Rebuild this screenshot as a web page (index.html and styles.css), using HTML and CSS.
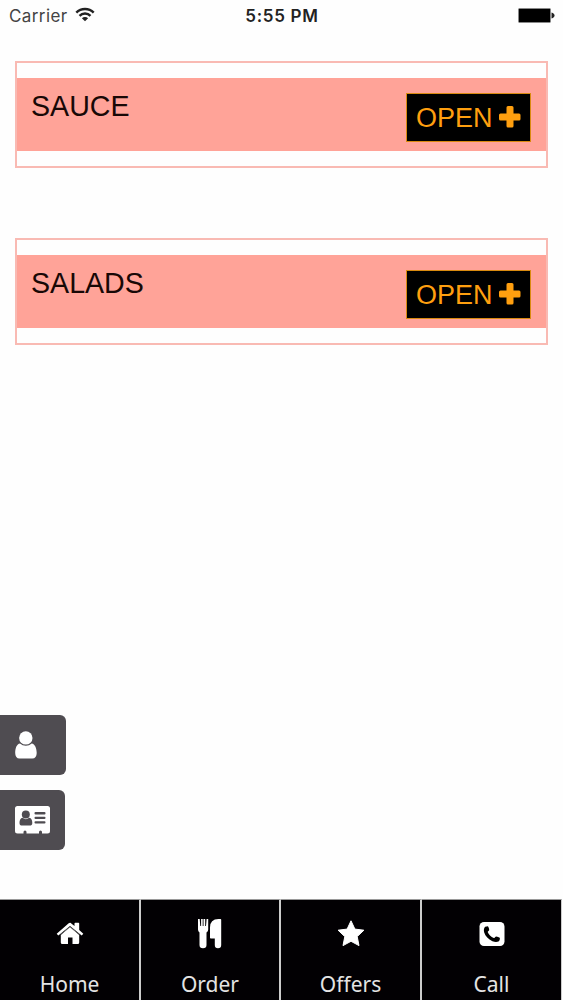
FILE: index.html
```html
<!DOCTYPE html>
<html lang="en">
  <head>
    <meta charset="utf-8" />
    <meta name="viewport" content="width=device-width, initial-scale=1.0" />
    <title>Menu</title>
    <link rel="stylesheet" href="styles.css">
  </head>

  <body>
    <div class="screen">
      <header class="status-bar">
        <div class="carrier">
          <span>Carrier</span>
          <svg class="wifi" width="20" height="15" viewBox="0 0 20 15">
            <path d="M1.300 5.600a12.200 12.200 0 0 1 17.400 0M4.500 8.800a7.800 7.800 0 0 1 11 0" fill="none" stroke="#222" stroke-width="2.400" />
            <path d="M10 14.300L6.900 11.200a4.300 4.300 0 0 1 6.200 0z" fill="#222" />
          </svg>
        </div>
        <div class="time">5:55 PM</div>
        <svg class="battery" width="37" height="15" viewBox="0 0 37 15">
          <rect x=".5" y=".5" width="32" height="14" rx="1" fill="#000" stroke="#888" />
          <path d="M33.500 4.500c4 1 4 5 0 6z" fill="#222" />
        </svg>
      </header>

      <main class="menu">
        <section class="category">
          <div class="category-header">
            <h2>SAUCE</h2>
            <button class="open-btn">
              <span>OPEN</span>
              <svg width="22" height="22" viewBox="0 0 22 22"><path d="M9 0h4q1.500 0 1.500 1.500v6h5.500q1.500 0 1.500 1.500v4q0 1.500-1.500 1.500h-5.500v5.500q0 1.500-1.500 1.500h-4q-1.500 0-1.500-1.500v-5.500h-6q-1.500 0-1.500-1.500v-4q0-1.500 1.500-1.500h6v-6q0-1.500 1.500-1.500z" /></svg>
            </button>
          </div>
        </section>

        <section class="category">
          <div class="category-header">
            <h2>SALADS</h2>
            <button class="open-btn">
              <span>OPEN</span>
              <svg width="22" height="22" viewBox="0 0 22 22"><path d="M9 0h4q1.500 0 1.500 1.500v6h5.500q1.500 0 1.500 1.500v4q0 1.500-1.500 1.500h-5.500v5.500q0 1.500-1.500 1.500h-4q-1.500 0-1.500-1.500v-5.500h-6q-1.500 0-1.500-1.500v-4q0-1.500 1.500-1.500h6v-6q0-1.500 1.500-1.500z" /></svg>
            </button>
          </div>
        </section>
      </main>

      <!--shortcuts on the left edge-->
      <aside class="side-buttons">
        <a class="side-btn side-btn-user">
          <svg width="22" height="28" viewBox="0 0 22 28" fill="#fff">
            <path d="M5 12.500C1.800 13 .200 17 .200 22c0 3.500 1.600 5.500 4.300 5.500h12.800c2.800 0 4.400-2 4.400-5.500-.100-5-1.800-9-5-9.500a8.500 8.500 0 0 1-11.700 0z" />
            <circle cx="10.800" cy="6.900" r="6.700" />
          </svg>
        </a>
        <a class="side-btn side-btn-card">
          <svg width="35" height="28" viewBox="0 0 35 28">
            <path d="M2.500 0h30Q35 0 35 2.500v22.500q0 2.500-2.500 2.500H27v-1.500q0-1.500-1.500-1.500T24 26v1.500H11.500V26q0-1.500-1.500-1.500T8.500 26v1.500h-6Q0 27.500 0 25V2.500Q0 0 2.500 0z" fill="#fff" />
            <g fill="#4f4c51">
              <circle cx="10.800" cy="8.600" r="4" />
              <path d="M7.600 11.800c-2.200.300-3.100 2.500-3.100 5.100 0 1.800 1 2.700 2.600 2.700h7.600c1.600 0 2.600-.9 2.600-2.700 0-2.600-.9-4.800-3.100-5.100a5 5 0 0 1-6.600 0z" />
              <rect x="19.500" y="6" width="11" height="2.600" rx="1" />
              <rect x="19.500" y="10.700" width="11" height="2.400" rx="1" />
              <rect x="19.500" y="15.300" width="11" height="2.300" rx="1" />
            </g>
          </svg>
        </a>
      </aside>

      <nav class="tab-bar">
        <a class="tab">
          <svg width="30" height="30" viewBox="0 0 30 30" fill="#fff">
            <path d="M15 8l9.200 8v7.500q0 1.500-1.500 1.500h-5.200v-6.500h-4.500v6.500H7.300q-1.500 0-1.500-1.500V16z" />
            <path d="M15 3.500l4.500 3.500V4.500q0-.7.700-.7h3.300q.7 0 .7.700v6.500l4.100 3.700-1.600 1.900L15 7 3.300 16.600 1.700 14.700 13.700 4.200q1.300-1.100 2.600 0z" />
            <path d="M5.500 15.700L15 7.800 24.500 15.700" fill="none" stroke="#777" stroke-width=".8" />
          </svg>
          <span>Home</span>
        </a>
        <a class="tab">
          <svg width="30" height="30" viewBox="0 0 30 30" fill="#fff">
            <path d="M3.500 0h1.200l.6 7h.8V0h1.600v7h.8V0h1.700v7h.8l.6-7h1.600v10.500q0 2-1.700 3V26q0 3.200-3.500 3.200T4.500 26V13.500Q3 12.500 3 10.500V0z" />
            <path d="M26.200.700V26q0 3.200-3.200 3.200T19.800 26v-6.500h-4q-.8 0-.8-.8V8.500Q15 0 23.500 0h2q.7 0 .7.700z" />
          </svg>
          <span>Order</span>
        </a>
        <a class="tab">
          <svg width="30" height="30" viewBox="0 0 30 30" fill="#fff">
            <path d="M15 1.800l3.900 8.300 9 1.100-6.700 6.400 1.800 9-8-4.300-8 4.300 1.800-9-6.700-6.400 9-1.100z" stroke="#fff" stroke-linejoin="round" />
          </svg>
          <span>Offers</span>
        </a>
        <a class="tab">
          <svg width="30" height="30" viewBox="0 0 30 30">
            <rect x="2.500" y="3" width="25" height="24" rx="4.500" fill="#fff" />
            <path d="M8.200 7.700l2.700-.4c.7.800 1.300 2.500 1.300 3.600 0 .9-1.500 1.300-1.500 2 .8 2.500 3.300 5 6.100 6.200.8.200 1.500-1.700 2.400-1.700 1 0 3 .8 3.600 1.400.3.900-.2 3-.9 3.500-2 1-4 .9-6.500-.1-4-1.800-7-4.900-8.200-8.700-.7-2.300-.3-4.600 1-5.800z" fill="#000" />
          </svg>
          <span>Call</span>
        </a>
      </nav>
    </div>
  </body>
</html>
```

FILE: styles.css
```css
* {
  box-sizing: border-box;
}

body {
  margin: 0;
  background: #fefefe;
  font-family: "Liberation Sans", Arial, sans-serif;
}

.screen {
  display: flex;
  flex-direction: column;
  width: 563px;
  height: 1000px;
  overflow: hidden;
}

/*status bar: carrier, time, battery*/
.status-bar {
  display: grid;
  grid-template-columns: 1fr auto 1fr;
  align-items: center;
  height: 31px;
  padding: 0 8px 0 9px;
  font-family: Inter, sans-serif;
  color: #222;
}

.carrier {
  display: flex;
  align-items: center;
  gap: 7px;
  font-size: 17px;
  letter-spacing: 0.4px;
  color: #444;
}

.wifi {
  margin-top: -2px;
}

.time {
  font-size: 17px;
  font-weight: 600;
  letter-spacing: 0.7px;
}

.battery {
  justify-self: end;
}

/*menu categories*/
.menu {
  display: flex;
  flex-direction: column;
  gap: 70px;
  padding: 30px 15px 0;
}

.category {
  padding: 15px 0;
  border: 2px solid #f9bab3;
}

.category-header {
  display: flex;
  justify-content: space-between;
  align-items: flex-start;
  height: 73px;
  padding: 15px 15px 0 14px;
  background: #ffa398;
}

.category h2 {
  margin: -3px 0 0;
  font-size: 28.6px;
  font-weight: normal;
  line-height: 32px;
  color: #180806;
}

.open-btn {
  display: flex;
  align-items: center;
  gap: 7px;
  width: 125px;
  height: 49px;
  padding: 0 0 0 9px;
  border: 1.5px solid #d98a10;
  background: #000;
  font-family: inherit;
  font-size: 27px;
  color: #ff9f0f;
}

.open-btn span {
  padding-top: 2px;
}

.open-btn svg {
  margin: 0 0 2px -1px;
  fill: #ff9f0f;
}

.side-buttons {
  display: flex;
  flex-direction: column;
  gap: 15px;
  margin-top: auto;
  margin-bottom: 49px;
}

.side-btn {
  display: flex;
  align-items: center;
  height: 60px;
  padding-left: 15px;
  border-radius: 0 6px 6px 0;
  background: #4f4c51;
}

.side-btn-user {
  width: 66px;
}

.side-btn-card {
  width: 65px;
}

/*bottom navigation*/
.tab-bar {
  display: grid;
  grid-template-columns: 141px 140px 141px 140px;
  height: 101px;
}

.tab {
  display: flex;
  flex-direction: column;
  align-items: center;
  padding-top: 19px;
  border-top: 1px solid #999;
  border-right: 2px solid #ccc;
  background: #020003;
  font-family: "Noto Sans", sans-serif;
  font-size: 21px;
  line-height: 30px;
  color: #e4e4e4;
}

.tab:last-child {
  border-right-width: 1px;
}

.tab span {
  margin-top: 20px;
}
```
